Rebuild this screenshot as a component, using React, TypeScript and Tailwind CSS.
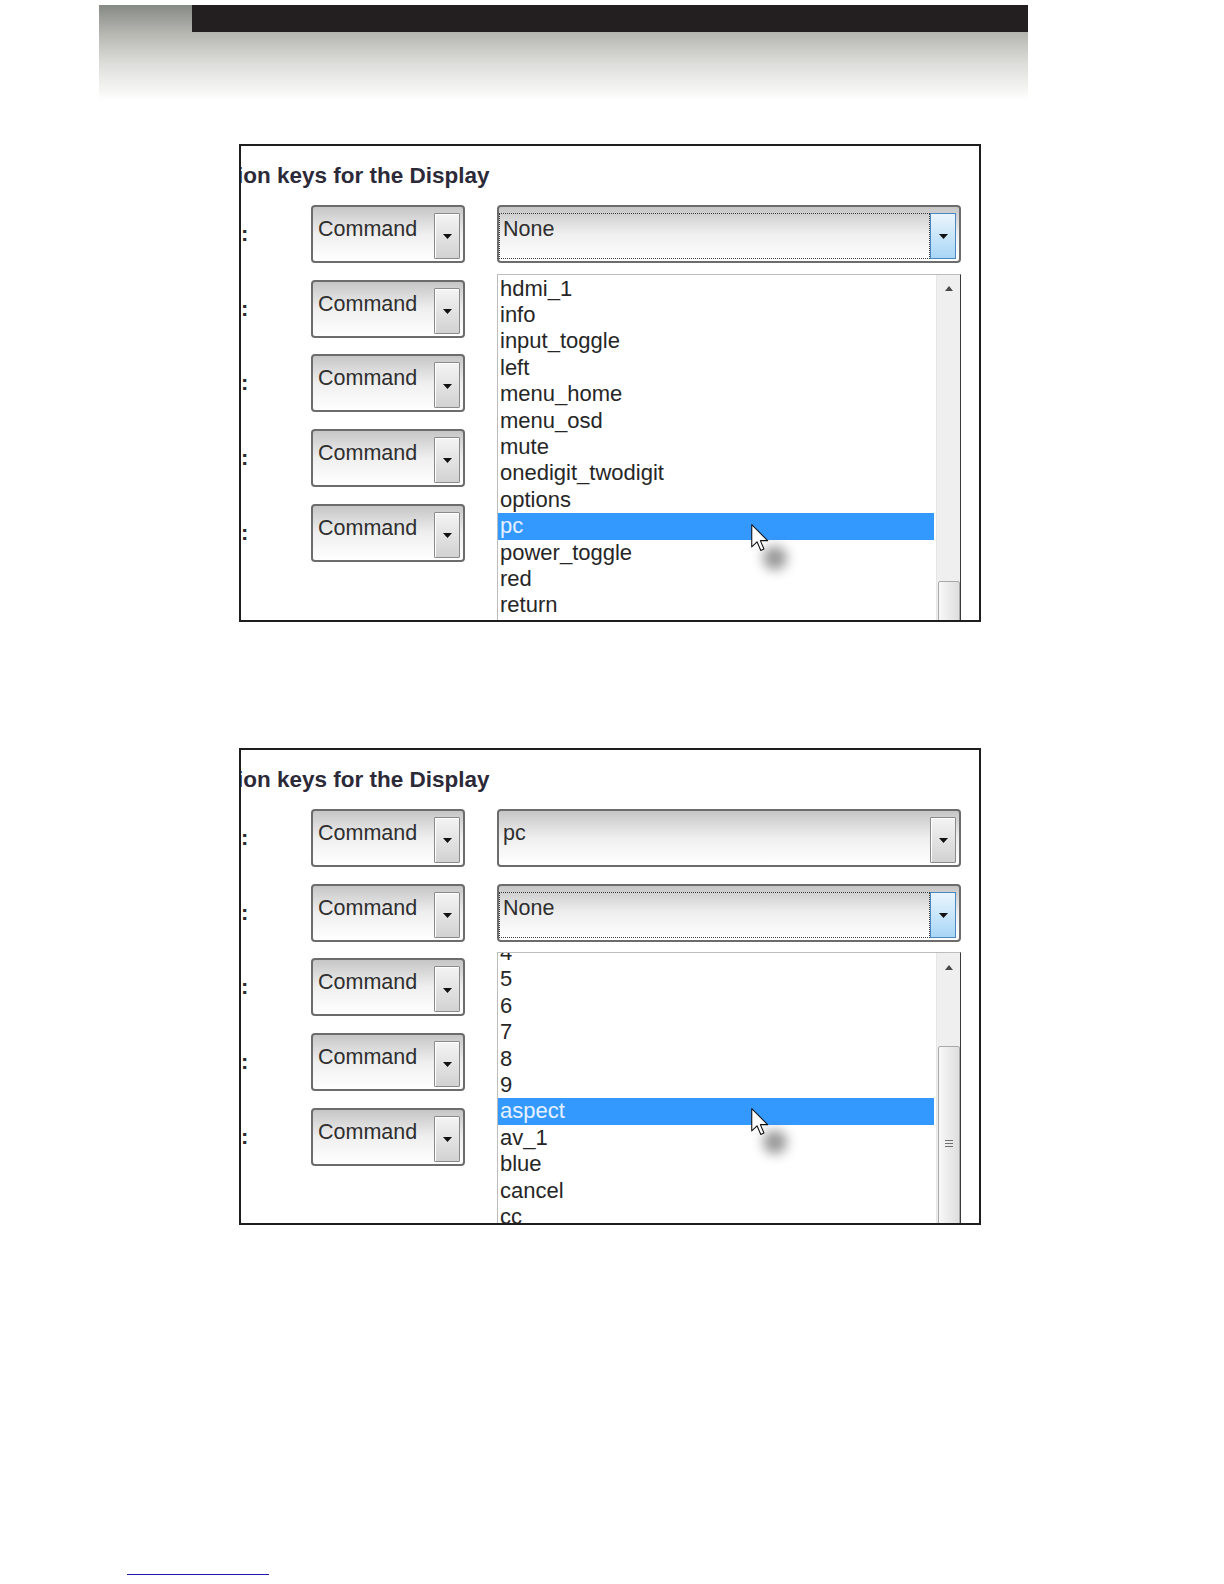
import React from 'react';

const sans = "font-['Liberation_Sans',Arial,sans-serif]";

const listA = ['hdmi_1', 'info', 'input_toggle', 'left', 'menu_home', 'menu_osd', 'mute', 'onedigit_twodigit', 'options', 'pc', 'power_toggle', 'red', 'return'];
const listB = ['4', '5', '6', '7', '8', '9', 'aspect', 'av_1', 'blue', 'cancel', 'cc'];

function DownArrow() {
  return (
    <svg width="9" height="5" viewBox="0 0 9 5">
      <path d="M0 0h9L4.5 5z" fill="#111" />
    </svg>
  );
}

function DropButton({ focused }: { focused?: boolean }) {
  return (
    <div
      className={
        focused
          ? 'flex w-[26px] shrink-0 items-center justify-center border border-[#4b88c2] bg-[linear-gradient(to_bottom,#eaf5fd,#a8d6f6)] pt-[2px]'
          : 'flex w-[26px] shrink-0 items-center justify-center rounded-[1px] border border-[#8a8a8a] bg-[linear-gradient(to_bottom,#f4f4f4,#d2d2d2)] pt-[2px] shadow-[inset_1px_1px_0_#ffffff]'
      }
    >
      <DownArrow />
    </div>
  );
}

function Select({ value, wide, focused }: { value: string; wide?: boolean; focused?: boolean }) {
  return (
    <div
      className={`flex h-[58px] shrink-0 rounded-[4px] border-2 border-[#6c6c6c] bg-[linear-gradient(to_bottom,#c6c6c6,#efefef_50%,#ffffff)] pt-[6px] pr-[3px] pb-[2px] ${wide ? 'w-[464px]' : 'w-[154px]'}`}
    >
      <div className={focused ? 'flex-1 border border-dotted border-[#3a3a3a] pt-[3px] pl-[3px]' : wide ? 'flex-1 pt-[4px] pl-[4px]' : 'flex-1 pt-[4px] pl-[5px]'}>
        <span className={`${sans} text-[21.5px] leading-[24px] text-[#2f2f2f]`}>{value}</span>
      </div>
      <DropButton focused={focused} />
    </div>
  );
}

function Cursor({ className }: { className: string }) {
  return (
    <div className={`absolute ${className}`}>
      <div className="absolute top-[22px] left-[12px] h-[24px] w-[24px] rounded-full bg-[#555555] opacity-60 blur-[6px]" />
      <svg className="relative" width="18" height="28" viewBox="0 0 12.5 19.5">
        <path d="M0.5 0.5 L0.5 16 L4.2 12.4 L6.8 18.4 L9 17.4 L6.5 11.6 L11.6 11.6 Z" fill="#ffffff" stroke="#111" strokeWidth="0.75" strokeLinejoin="round" />
      </svg>
    </div>
  );
}

function ListBox({
  items,
  selected,
  listClass,
  thumbClass,
  cursorClass,
  grip,
}: {
  items: string[];
  selected: string;
  listClass: string;
  thumbClass: string;
  cursorClass: string;
  grip?: boolean;
}) {
  return (
    <div className="relative mt-[10.7px] flex h-[360px] w-[464px] border border-[#bdbdbd] border-r-[#3a3a3a] bg-white">
      <div className="flex-1 overflow-hidden pr-[2px]">
        <ul className={`${listClass} ${sans} text-[22px] leading-[26.4px] text-[#262626]`}>
          {items.map((it) => (
            <li key={it} className={it === selected ? 'bg-[#3399ff] pl-[2px] text-[#e6f1ff]' : 'pl-[2px]'}>
              {it}
            </li>
          ))}
        </ul>
      </div>
      <div className="flex w-[24px] flex-col items-center border-l border-[#e6e6e6] bg-[#efefef]">
        <div className="flex h-[24px] shrink-0 items-center justify-center pt-[4px]">
          <svg width="8" height="5" viewBox="0 0 8 5">
            <path d="M0 5h8L4 0z" fill="#4a4a4a" />
          </svg>
        </div>
        <div className={`${thumbClass} flex w-[22px] shrink-0 items-center justify-center rounded-[2px] border border-[#a9a9a9] bg-[linear-gradient(to_right,#f8f8f8,#dedede)]`}>
          {grip && (
            <div className="flex flex-col gap-[2px]">
              <div className="h-[1px] w-[8px] bg-[#6f6f6f]" />
              <div className="h-[1px] w-[8px] bg-[#6f6f6f]" />
              <div className="h-[1px] w-[8px] bg-[#6f6f6f]" />
            </div>
          )}
        </div>
      </div>
      <Cursor className={cursorClass} />
    </div>
  );
}

function Panel({ children, className }: { children: React.ReactNode; className: string }) {
  return (
    <div className={`${className} ml-[239px] w-[742px] overflow-hidden border-2 border-[#1e1e1e] bg-white`}>
      <h2 className={`${sans} -ml-[4px] pt-[17px] text-[22.5px] leading-[26px] font-bold whitespace-nowrap text-[#2c2a38]`}>
        ion keys for the Display
      </h2>
      <div className="mt-[15.5px] flex items-start">
        <div className="flex flex-col gap-[16.7px]">
          {[0, 1, 2, 3, 4].map((i) => (
            <div key={i} className="flex">
              <span className={`${sans} w-[70px] text-[22px] leading-[58px] font-bold text-[#2a2a2a]`}>:</span>
              <Select value="Command" />
            </div>
          ))}
        </div>
        <div className="ml-[32px] flex flex-col">{children}</div>
      </div>
    </div>
  );
}

export default function App() {
  return (
    <div className="min-h-[1584px] w-[1224px] bg-white">
      {/* page header strip */}
      <div className="mt-[5px] ml-[99px] h-[96px] w-[929px] bg-[linear-gradient(to_bottom,#868984_0%,#b7b7b2_30%,#dededb_62%,#ffffff_100%)]">
        <div className="ml-[93px] h-[27px] bg-[#231f20]" />
      </div>

      <Panel className="mt-[43.4px] h-[478px]">
        <Select value="None" wide focused />
        <ListBox
          items={listA}
          selected="pc"
          listClass="mt-[1px]"
          thumbClass="mt-[282px] h-[80px]"
          cursorClass="top-[249px] left-[253px]"
        />
      </Panel>

      <Panel className="mt-[126px] h-[477px]">
        <Select value="pc" wide />
        <div className="mt-[16.7px]">
          <Select value="None" wide focused />
        </div>
        <ListBox
          items={listB}
          selected="aspect"
          listClass="-mt-[13.4px]"
          thumbClass="mt-[69px] h-[194px]"
          cursorClass="top-[155px] left-[253px]"
          grip
        />
      </Panel>

      <div className="mt-[349px] ml-[127px] h-[1px] w-[142px] bg-[#1c1ca6]" />
    </div>
  );
}
